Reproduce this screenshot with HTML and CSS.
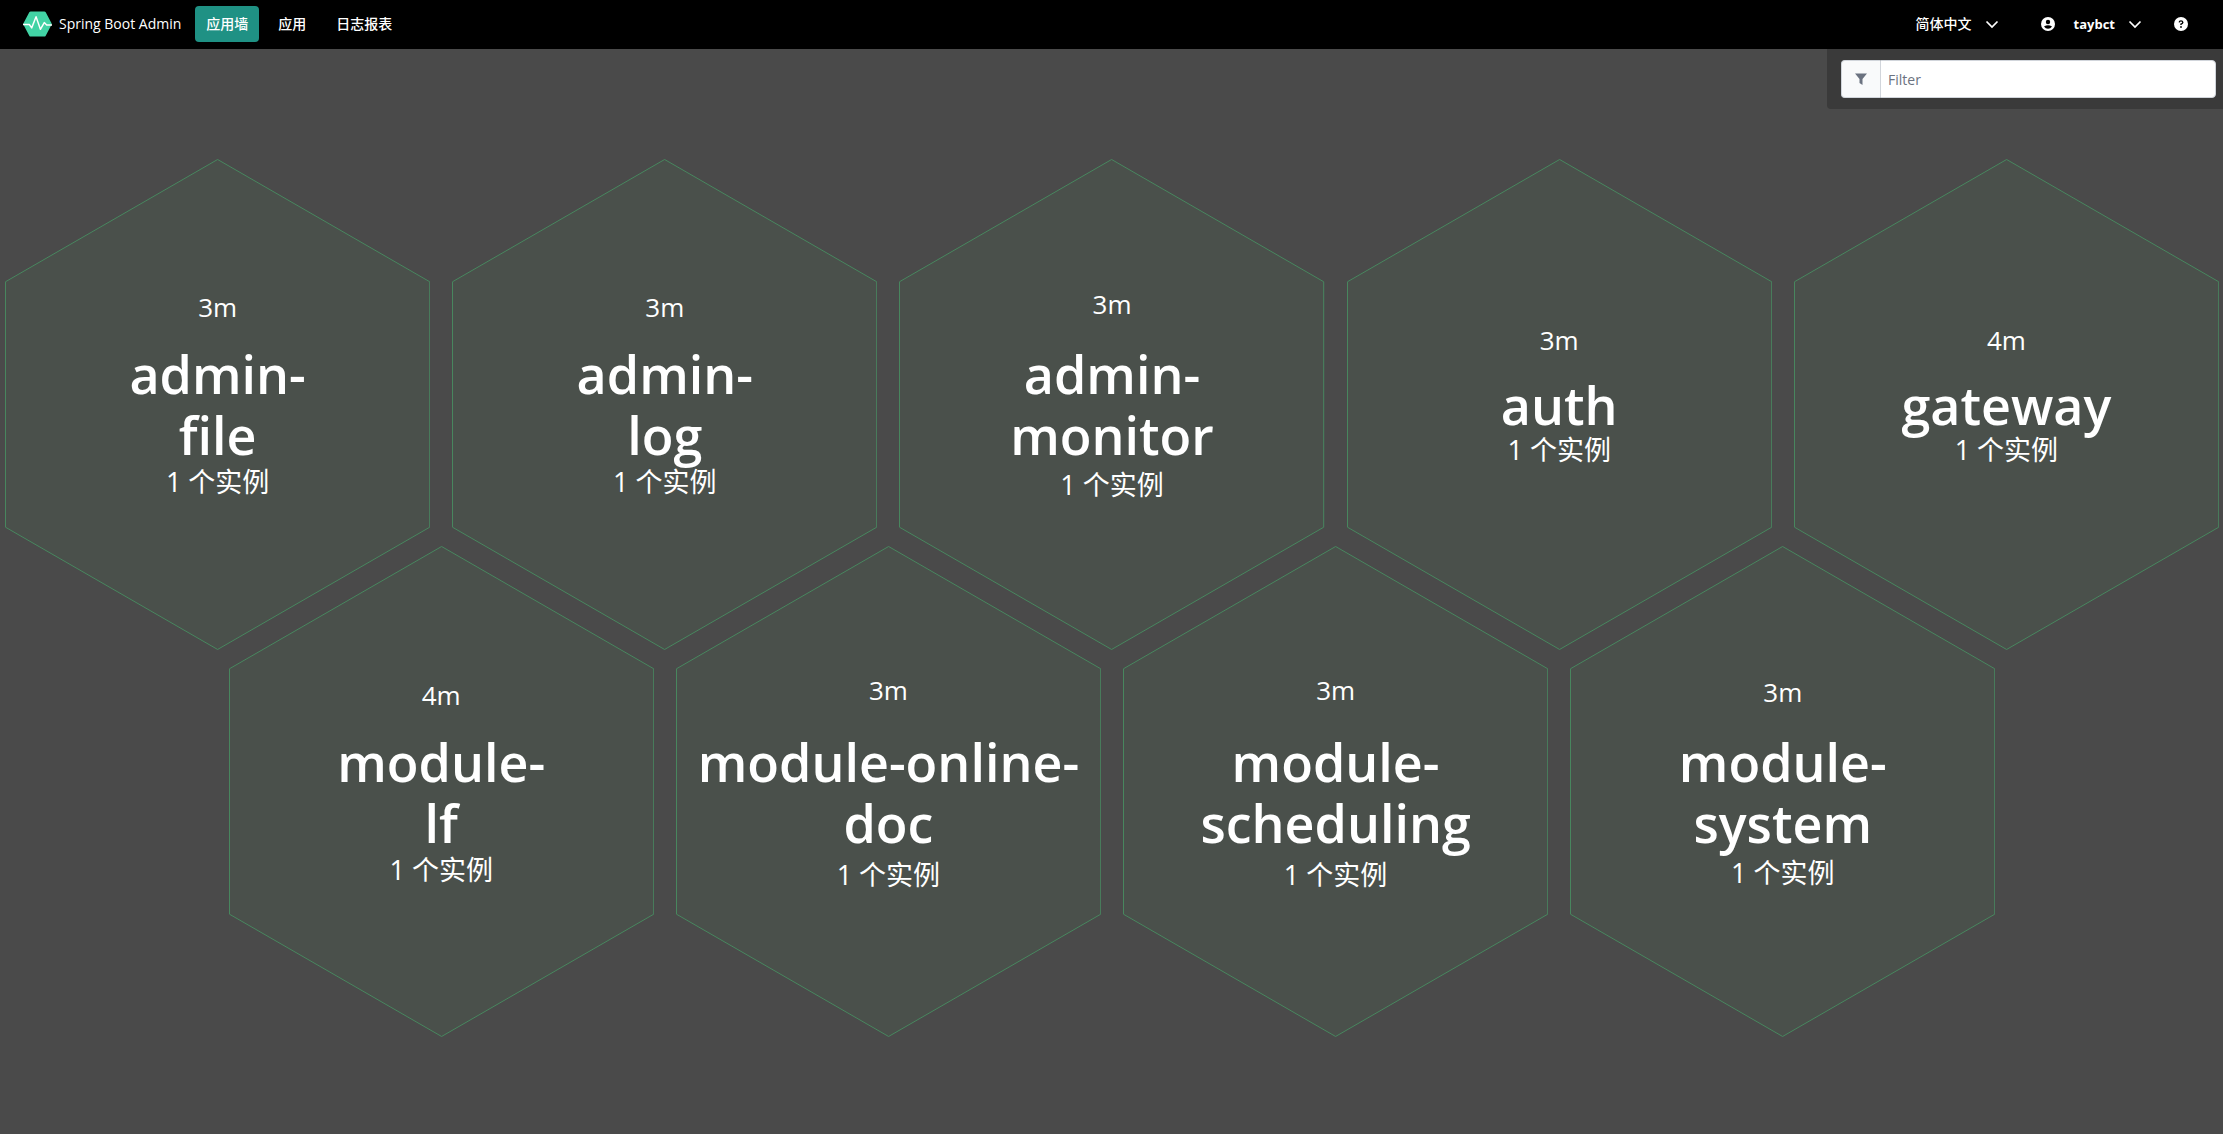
FILE: index.html
```html
<!DOCTYPE html>
<html lang="zh-CN">
<head>
<meta charset="utf-8">
<meta name="viewport" content="width=device-width, initial-scale=1">
<title>Spring Boot Admin</title>
<link rel="stylesheet" href="styles.css">
</head>
<body>
<header class="navbar">
  <a class="brand" href="#">
    <svg class="brand-logo" viewBox="0 0 30 26" aria-hidden="true">
      <path d="M8 0h14q1 0 1.500 .9l6 11.200q.5.900 0 1.800l-6 11.200q-.5.900-1.500.900H8q-1 0-1.500-.9l-6-11.200q-.5-.9 0-1.800l6-11.200Q7 0 8 0z" fill="#42d3a5"/>
      <path d="M0 13.500h6.500l2.500 3.500 4.500-11.500 4.500 13 4-7 2.500 2.500h5.500" fill="none" stroke="#fff" stroke-width="1.500" stroke-linejoin="round"/>
    </svg>
    <span>Spring Boot Admin</span>
  </a>
  <nav class="nav">
    <a class="nav-link active" href="#">应用墙</a>
    <a class="nav-link" href="#">应用</a>
    <a class="nav-link" href="#">日志报表</a>
  </nav>
  <div class="nav nav-end">
    <button class="nav-link" type="button">简体中文
      <svg class="chevron" viewBox="0 0 14 14" aria-hidden="true"><path d="M1.500 4.500 7 10l5.500-5.500"/></svg>
    </button>
    <button class="nav-link user" type="button">
      <svg class="icon" viewBox="0 0 14 14" aria-hidden="true"><circle cx="7" cy="7" r="7" fill="#fff"/><circle cx="7" cy="5" r="2.200" fill="#000"/><path d="M3 9.500q4-2.600 8 0-1.500 2.300-4 2.300T3 9.500z" fill="#000"/></svg>
      <strong>taybct</strong>
      <svg class="chevron" viewBox="0 0 14 14" aria-hidden="true"><path d="M1.500 4.500 7 10l5.500-5.500"/></svg>
    </button>
    <a class="nav-link" href="#" aria-label="Help">
      <svg class="icon" viewBox="0 0 14 14" aria-hidden="true"><circle cx="7" cy="7" r="7" fill="#fff"/><path d="M5.200 5.400Q5.400 3.900 7 3.900T8.800 5.400Q8.800 6.400 7 7.100V8" fill="none" stroke="#000" stroke-width="1.400"/><circle cx="7" cy="10" r=".9" fill="#000"/></svg>
    </a>
  </div>
</header>
<main class="wallboard">
  <form class="filter">
    <label class="filter-icon" for="filter" aria-label="Filter">
      <svg class="funnel" viewBox="0 0 12 12" aria-hidden="true"><path d="M0 .5h12L7.500 6v6l-3-2V6z"/></svg>
    </label>
    <input class="filter-input" id="filter" type="text" placeholder="Filter">
  </form>
  <div class="row">
    <a class="hex" href="#"><svg class="hex-shape" viewBox="0 0 433 500" aria-hidden="true"><path d="M216.500.5l216 124.500v250l-216 124.500L.5 375V125z"/></svg>
      <span class="uptime">3m</span><h2 class="name">admin-<br>file</h2><span class="count">1 个实例</span></a>
    <a class="hex" href="#"><svg class="hex-shape" viewBox="0 0 433 500" aria-hidden="true"><path d="M216.500.5l216 124.500v250l-216 124.500L.5 375V125z"/></svg>
      <span class="uptime">3m</span><h2 class="name">admin-<br>log</h2><span class="count">1 个实例</span></a>
    <a class="hex" href="#"><svg class="hex-shape" viewBox="0 0 433 500" aria-hidden="true"><path d="M216.500.5l216 124.500v250l-216 124.500L.5 375V125z"/></svg>
      <span class="uptime">3m</span><h2 class="name name-long">admin-<br>monitor</h2><span class="count">1 个实例</span></a>
    <a class="hex" href="#"><svg class="hex-shape" viewBox="0 0 433 500" aria-hidden="true"><path d="M216.500.5l216 124.500v250l-216 124.500L.5 375V125z"/></svg>
      <span class="uptime">3m</span><h2 class="name name-short">auth</h2><span class="count">1 个实例</span></a>
    <a class="hex" href="#"><svg class="hex-shape" viewBox="0 0 433 500" aria-hidden="true"><path d="M216.500.5l216 124.500v250l-216 124.500L.5 375V125z"/></svg>
      <span class="uptime">4m</span><h2 class="name name-short">gateway</h2><span class="count">1 个实例</span></a>
  </div>
  <div class="row">
    <a class="hex" href="#"><svg class="hex-shape" viewBox="0 0 433 500" aria-hidden="true"><path d="M216.500.5l216 124.500v250l-216 124.500L.5 375V125z"/></svg>
      <span class="uptime">4m</span><h2 class="name">module-<br>lf</h2><span class="count">1 个实例</span></a>
    <a class="hex" href="#"><svg class="hex-shape" viewBox="0 0 433 500" aria-hidden="true"><path d="M216.500.5l216 124.500v250l-216 124.500L.5 375V125z"/></svg>
      <span class="uptime">3m</span><h2 class="name name-longer">module-online-<br>doc</h2><span class="count">1 个实例</span></a>
    <a class="hex" href="#"><svg class="hex-shape" viewBox="0 0 433 500" aria-hidden="true"><path d="M216.500.5l216 124.500v250l-216 124.500L.5 375V125z"/></svg>
      <span class="uptime">3m</span><h2 class="name name-longer">module-<br>scheduling</h2><span class="count">1 个实例</span></a>
    <a class="hex" href="#"><svg class="hex-shape" viewBox="0 0 433 500" aria-hidden="true"><path d="M216.500.5l216 124.500v250l-216 124.500L.5 375V125z"/></svg>
      <span class="uptime">3m</span><h2 class="name name-long">module-<br>system</h2><span class="count">1 个实例</span></a>
  </div>
</main>
</body>
</html>
```
FILE: styles.css
```css
* {
  box-sizing: border-box;
}

body {
  margin: 0;
  min-height: 100vh;
  display: flex;
  flex-direction: column;
  background: #4a4a4a;
  color: #fff;
  font: 14px/20px "Open Sans", "Noto Sans CJK SC", sans-serif;
}

a {
  color: inherit;
  text-decoration: none;
}

button,
input {
  font: inherit;
}

/* Top bar */
.navbar {
  display: flex;
  align-items: center;
  padding: 6px 24px 7px 23px;
  background: #000;
}

.brand {
  display: flex;
  align-items: center;
  gap: 7px;
  margin-right: 14px;
}

.brand-logo {
  width: 29px;
  height: 26px;
}

.nav {
  display: flex;
  align-items: center;
  gap: 8px;
}

.nav-end {
  margin-left: auto;
}

.nav-link {
  display: flex;
  align-items: center;
  height: 36px;
  padding: 0 11px;
  border: 0;
  border-radius: 4px;
  background: none;
  color: #fff;
  font-weight: 500;
}

.nav-link.active {
  background: #1f9184;
}

.nav-end .nav-link {
  gap: 13px;
}

.nav-end .user {
  margin: 0 2px 0 12px;
}

.user .icon {
  margin-right: 6px;
}

.user strong {
  font-size: 13px;
}

.icon,
.chevron {
  width: 14px;
  height: 14px;
}

.chevron path {
  fill: none;
  stroke: #fff;
  stroke-width: 1.7;
}

/* Wallboard */
.wallboard {
  position: relative;
  z-index: 0;
  flex: 1;
  padding: 110px 4px 96px 5px;
}

.filter {
  position: absolute;
  top: 0;
  right: 0;
  display: flex;
  width: 396px;
  padding: 11px 7px 11px 14px;
  border-bottom-left-radius: 4px;
  background: #3a3a3a;
}

.filter-icon {
  display: flex;
  align-items: center;
  justify-content: center;
  width: 39px;
  border: 1px solid #d1d5db;
  border-right: 0;
  border-radius: 4px 0 0 4px;
  background: #f9fafb;
}

.funnel {
  width: 12px;
  height: 12px;
  fill: #6b7280;
}

.filter-input {
  flex: 1;
  min-width: 0;
  height: 38px;
  padding: 0 7px;
  border: 1px solid #d1d5db;
  border-radius: 0 4px 4px 0;
  background: #fff;
  color: #111827;
}

.filter-input::placeholder {
  color: #6b7280;
}

.row {
  display: flex;
  justify-content: center;
  gap: 22px;
}

/* Rows interlock: pull up by a quarter of a hexagon's height, less the gap */
.row + .row {
  margin-top: calc((100% - 88px) / -5 * 0.2887 + 19px);
}

.hex {
  position: relative;
  flex: 0 0 calc((100% - 88px) / 5);
  aspect-ratio: 433 / 500;
  display: flex;
  flex-direction: column;
  align-items: center;
  justify-content: center;
  padding-bottom: 19px;
  text-align: center;
}

.hex-shape {
  position: absolute;
  inset: 0;
  z-index: -1;
  width: 100%;
  height: 100%;
  fill: #4a504b;
  stroke: #48875f;
}

.hex-shape path {
  vector-effect: non-scaling-stroke;
}

.uptime {
  font-size: 26px;
  line-height: 34px;
}

.count {
  font-size: 27px;
  line-height: 34px;
}

/* Longer names get more air above and below */
.name {
  margin: 19px 0 0;
  font-size: 52px;
  font-weight: 600;
  line-height: 61px;
}

.name-short {
  margin: 17px 0 -2px;
}

.name-long {
  margin: 22px 0 3px;
}

.name-longer {
  margin: 24px 0 5px;
}
```
